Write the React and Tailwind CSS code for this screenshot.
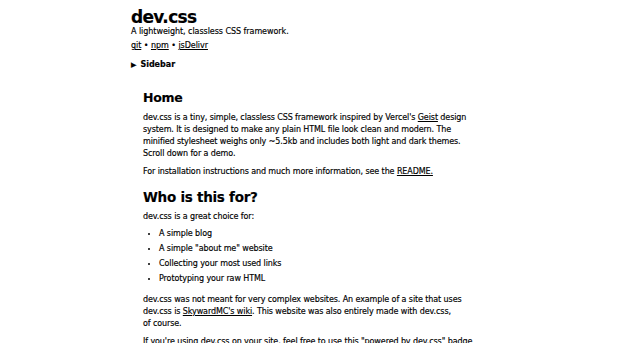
export default function App() {
  const font = { fontFamily: '"DejaVu Sans", Verdana, sans-serif' };
  return (
    <div className="min-h-[343px] bg-white text-black [-webkit-text-stroke:0.15px_black]" style={font}>
      <header className="pl-[131px] pt-[8px]">
        <h1 className="text-[17px] font-bold leading-[18px] tracking-[-0.04em]">dev.css</h1>
        <p className="text-[8px] leading-[12px] tracking-[-0.05px]">A lightweight, classless CSS framework.</p>
        <p className="text-[8px] leading-[12px] mt-[2px] tracking-[-0.05px]">
          <a className="underline">git</a> • <a className="underline">npm</a> • <a className="underline">jsDelivr</a>
        </p>
        <p className="text-[8px] leading-[12px] mt-[7px] font-bold">
          <span className="text-[7px] mr-[4px]">▶</span>Sidebar
        </p>
      </header>
      <main className="pl-[143px] pt-[18px] text-[8px] leading-[12px] tracking-[-0.1px]">
        <div className="w-[326px]">
          <h2 className="text-[12.5px] font-bold leading-[18px] tracking-[-0.02em]">Home</h2>
          <p className="mt-[5px]">
            dev.css is a tiny, simple, classless CSS framework inspired by Vercel's <a className="underline">Geist</a> design system. It is designed to make any plain HTML file look clean and modern. The minified stylesheet weighs only ~5.5kb and includes both light and dark themes. Scroll down for a demo.
          </p>
          <p className="mt-[6px]">
            For installation instructions and much more information, see the <a className="underline">README.</a>
          </p>
          <h2 className="text-[13.5px] font-bold leading-[20px] mt-[9px] tracking-[-0.02em]">Who is this for?</h2>
          <p className="mt-[4px]">dev.css is a great choice for:</p>
          <ul className="list-disc pl-[16px] mt-[5px] flex flex-col gap-[3px]">
            <li>A simple blog</li>
            <li>A simple "about me" website</li>
            <li>Collecting your most used links</li>
            <li>Prototyping your raw HTML</li>
          </ul>
          <p className="mt-[9px]">
            dev.css was not meant for very complex websites. An example of a site that uses dev.css is <a className="underline">SkywardMC's wiki</a>. This website was also entirely made with dev.css,
            <br />
            of course.
          </p>
          <p className="mt-[6px] whitespace-nowrap">
            If you're using dev.css on your site, feel free to use this "powered by dev.css" badge
          </p>
        </div>
      </main>
    </div>
  );
}
